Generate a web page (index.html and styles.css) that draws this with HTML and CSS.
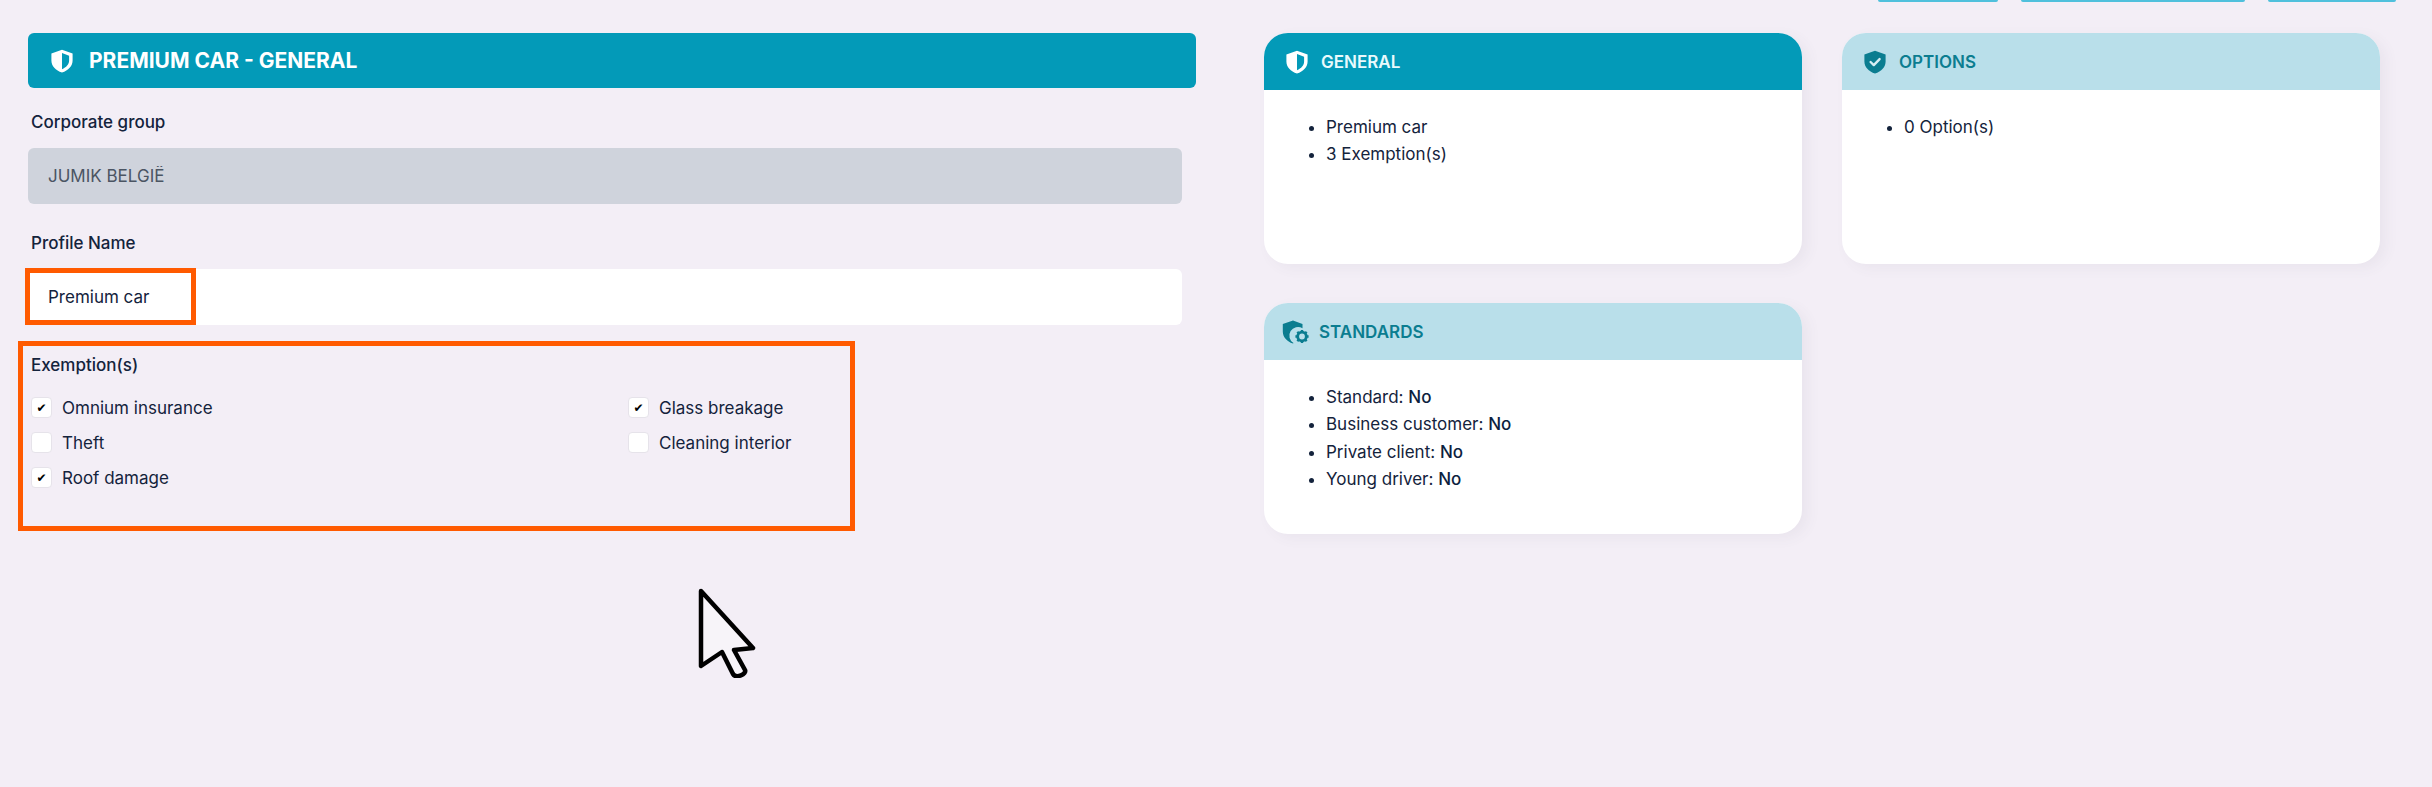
FILE: index.html
```html
<!DOCTYPE html>
<html lang="en">
<head>
  <meta charset="UTF-8">
  <meta name="viewport" content="width=device-width, initial-scale=1.0">
  <title>Premium car - General</title>
  <link rel="stylesheet" href="styles.css">
</head>
<body>
  <div class="top-tabs">
    <span class="top-tab tab-a"></span>
    <span class="top-tab tab-b"></span>
    <span class="top-tab tab-c"></span>
  </div>
  <div class="page">
    <section class="form-column">
      <h1 class="form-title">
        <svg class="icon-lg" viewBox="0 0 24 24"><path fill="#fff" fill-rule="evenodd" d="M12 .8 22.6 4.4v7.2c0 5.600-4.200 10-10.600 12C5.600 21.600 1.400 17.200 1.400 11.600V4.400zM12 4 12 20.200c4.300-1.700 7.100-4.800 7.100-8.600V6.700z"/></svg>
        PREMIUM CAR - GENERAL
      </h1>
      <div class="field field-first">
        <label class="field-label">Corporate group</label>
        <input class="text-input text-input-disabled" type="text" value="JUMIK BELGIË" disabled>
      </div>
      <div class="field">
        <label class="field-label">Profile Name</label>
        <input class="text-input" type="text" value="Premium car">
      </div>
      <div class="exemptions">
        <div class="field-label">Exemption(s)</div>
        <div class="check-grid">
          <label class="check-row"><input class="check" type="checkbox" checked>Omnium insurance</label>
          <label class="check-row"><input class="check" type="checkbox" checked>Glass breakage</label>
          <label class="check-row"><input class="check" type="checkbox">Theft</label>
          <label class="check-row"><input class="check" type="checkbox">Cleaning interior</label>
          <label class="check-row"><input class="check" type="checkbox" checked>Roof damage</label>
        </div>
      </div>
    </section>

    <section class="cards">
      <div class="card">
        <h2 class="card-head card-head-dark">
          <svg class="icon-sm" viewBox="0 0 24 24"><path fill="#fff" fill-rule="evenodd" d="M12 .8 22.600 4.400v7.200c0 5.600-4.200 10-10.600 12C5.600 21.600 1.400 17.200 1.400 11.600V4.400zM12 4 12 20.200c4.300-1.700 7.100-4.800 7.100-8.600V6.700z"/></svg>
          GENERAL
        </h2>
        <ul class="card-list">
          <li>Premium car</li>
          <li>3 Exemption(s)</li>
        </ul>
      </div>
      <div class="card">
        <h2 class="card-head card-head-light">
          <svg class="icon-sm" viewBox="0 0 24 24"><path fill="#0b7d90" d="M12 .8 22.600 4.400v7.200c0 5.600-4.200 10-10.600 12C5.600 21.600 1.400 17.200 1.400 11.600V4.400z"/><path fill="none" stroke="#d6edf3" stroke-width="2.400" stroke-linecap="round" stroke-linejoin="round" d="M7.600 12l3.200 3.100 5.800-6"/></svg>
          OPTIONS
        </h2>
        <ul class="card-list">
          <li>0 Option(s)</li>
        </ul>
      </div>
      <div class="card">
        <h2 class="card-head card-head-light">
          <svg class="icon-md" viewBox="0 0 28 24"><path fill="#0b7d90" d="M11 .6 20.500 4v4.200a8 8 0 0 0-9 14.800l-.5.400C4.800 21.400.8 17 .8 11.400V4z"/><circle cx="20" cy="16.500" r="4.300" fill="none" stroke="#0b7d90" stroke-width="2.800"/><path stroke="#0b7d90" stroke-width="2.400" d="M20 9.900v2.400M20 20.700v2.400M13.400 16.500h2.400M24.200 16.500h2.400M15.300 11.800l1.700 1.700M23 19.500l1.700 1.700M15.300 21.200l1.700-1.700M23 13.500l1.700-1.700"/></svg>
          STANDARDS
        </h2>
        <ul class="card-list">
          <li>Standard: <span class="value">No</span></li>
          <li>Business customer: <span class="value">No</span></li>
          <li>Private client: <span class="value">No</span></li>
          <li>Young driver: <span class="value">No</span></li>
        </ul>
      </div>
    </section>
  </div>

  <!-- annotations drawn over the screen -->
  <div class="marker marker-name"></div>
  <div class="marker marker-exemptions"></div>
  <svg class="cursor" viewBox="0 0 58 90"><path fill="#f7f4f9" stroke="#000" stroke-width="4.500" stroke-linejoin="round" d="M3 3 55 60 36 62 47 82c2 4-9 9-12 4L24 64 3 78z"/></svg>
</body>
</html>
```

FILE: styles.css
```css
* {
  box-sizing: border-box;
}
body {
  margin: 0;
  height: 787px;
  overflow: hidden;
  background-color: #f3eef6;
  color: #14233c;
  font-family: "Inter", "Liberation Sans", sans-serif;
  font-size: 16px;
}
.top-tabs {
  display: flex;
  height: 2px;
  padding-left: 1878px;
}
.top-tab {
  background-color: #4fc0dc;
  border-radius: 0 0 3px 3px;
}
.tab-a {
  width: 120px;
  margin-right: 23px;
}
.tab-b {
  width: 224px;
  margin-right: 23px;
}
.tab-c {
  width: 128px;
}
.page {
  display: flex;
  padding: 31px 52px 0 28px;
}
.form-column {
  width: 1168px;
}
.form-title {
  display: flex;
  align-items: center;
  gap: 15px;
  height: 55px;
  margin: 0;
  padding-left: 22px;
  background-color: #039ab8;
  border-radius: 6px;
  color: #fff;
  font-size: 21px;
  font-weight: 700;
}
.icon-lg {
  width: 24px;
  height: 24px;
}
.field {
  width: 1154px;
  margin-top: 29px;
}
.field-first {
  margin-top: 24px;
}
.field-label {
  display: block;
  height: 20px;
  margin-left: 3px;
  font-size: 17px;
  font-weight: 500;
  line-height: 20px;
}
.text-input {
  display: block;
  width: 100%;
  height: 56px;
  margin-top: 16px;
  padding: 0 20px;
  border: 0;
  border-radius: 6px;
  background-color: #fff;
  color: #14233c;
  font-family: inherit;
  font-size: 17px;
}
.text-input-disabled {
  background-color: #cfd3dc;
  color: #4b5563;
}
.exemptions {
  margin-top: 30px;
}
.check-grid {
  display: grid;
  grid-template-columns: 597px 1fr;
  row-gap: 14px;
  margin-top: 22px;
  margin-left: 3px;
}
.check-row {
  display: flex;
  align-items: center;
  gap: 10px;
  height: 21px;
  font-size: 17px;
}
.check {
  appearance: none;
  display: flex;
  align-items: center;
  justify-content: center;
  width: 21px;
  height: 21px;
  margin: 0;
  background-color: #fff;
  border: 1px solid #e6e3ea;
  border-radius: 4px;
}
.check:checked::after {
  content: "✔";
  color: #000;
  font-family: "DejaVu Sans", sans-serif;
  font-size: 12px;
  line-height: 1;
}
.cards {
  display: grid;
  grid-template-columns: 538px 538px;
  grid-auto-rows: 231px;
  column-gap: 40px;
  row-gap: 39px;
  margin-left: 68px;
}
.card {
  overflow: hidden;
  background-color: #fff;
  border-radius: 24px;
  box-shadow: 6px 4px 14px rgba(90, 80, 110, 0.06);
}
.card-head {
  display: flex;
  align-items: center;
  gap: 12px;
  height: 57px;
  margin: 0;
  padding-left: 21px;
  font-size: 17px;
  font-weight: 600;
}
.card-head-dark {
  background-color: #039ab8;
  color: #eafafd;
}
.card-head-light {
  background-color: #b9dfea;
  color: #0b7d90;
}
.icon-sm {
  width: 24px;
  height: 24px;
}
.icon-md {
  width: 28px;
  height: 24px;
  margin-right: -3px;
  margin-left: -3px;
}
.card-list {
  margin: 24px 0 0;
  padding-left: 62px;
  font-size: 17px;
  line-height: 27.300px;
}
.value {
  font-weight: 500;
  color: #0d1f3f;
}
.marker {
  position: absolute;
  border: 5px solid #ff5a00;
}
.marker-name {
  left: 25px;
  top: 268px;
  width: 171px;
  height: 57px;
}
.marker-exemptions {
  left: 18px;
  top: 341px;
  width: 837px;
  height: 190px;
}
.cursor {
  position: absolute;
  left: 698px;
  top: 588px;
  width: 58px;
  height: 90px;
}
```
